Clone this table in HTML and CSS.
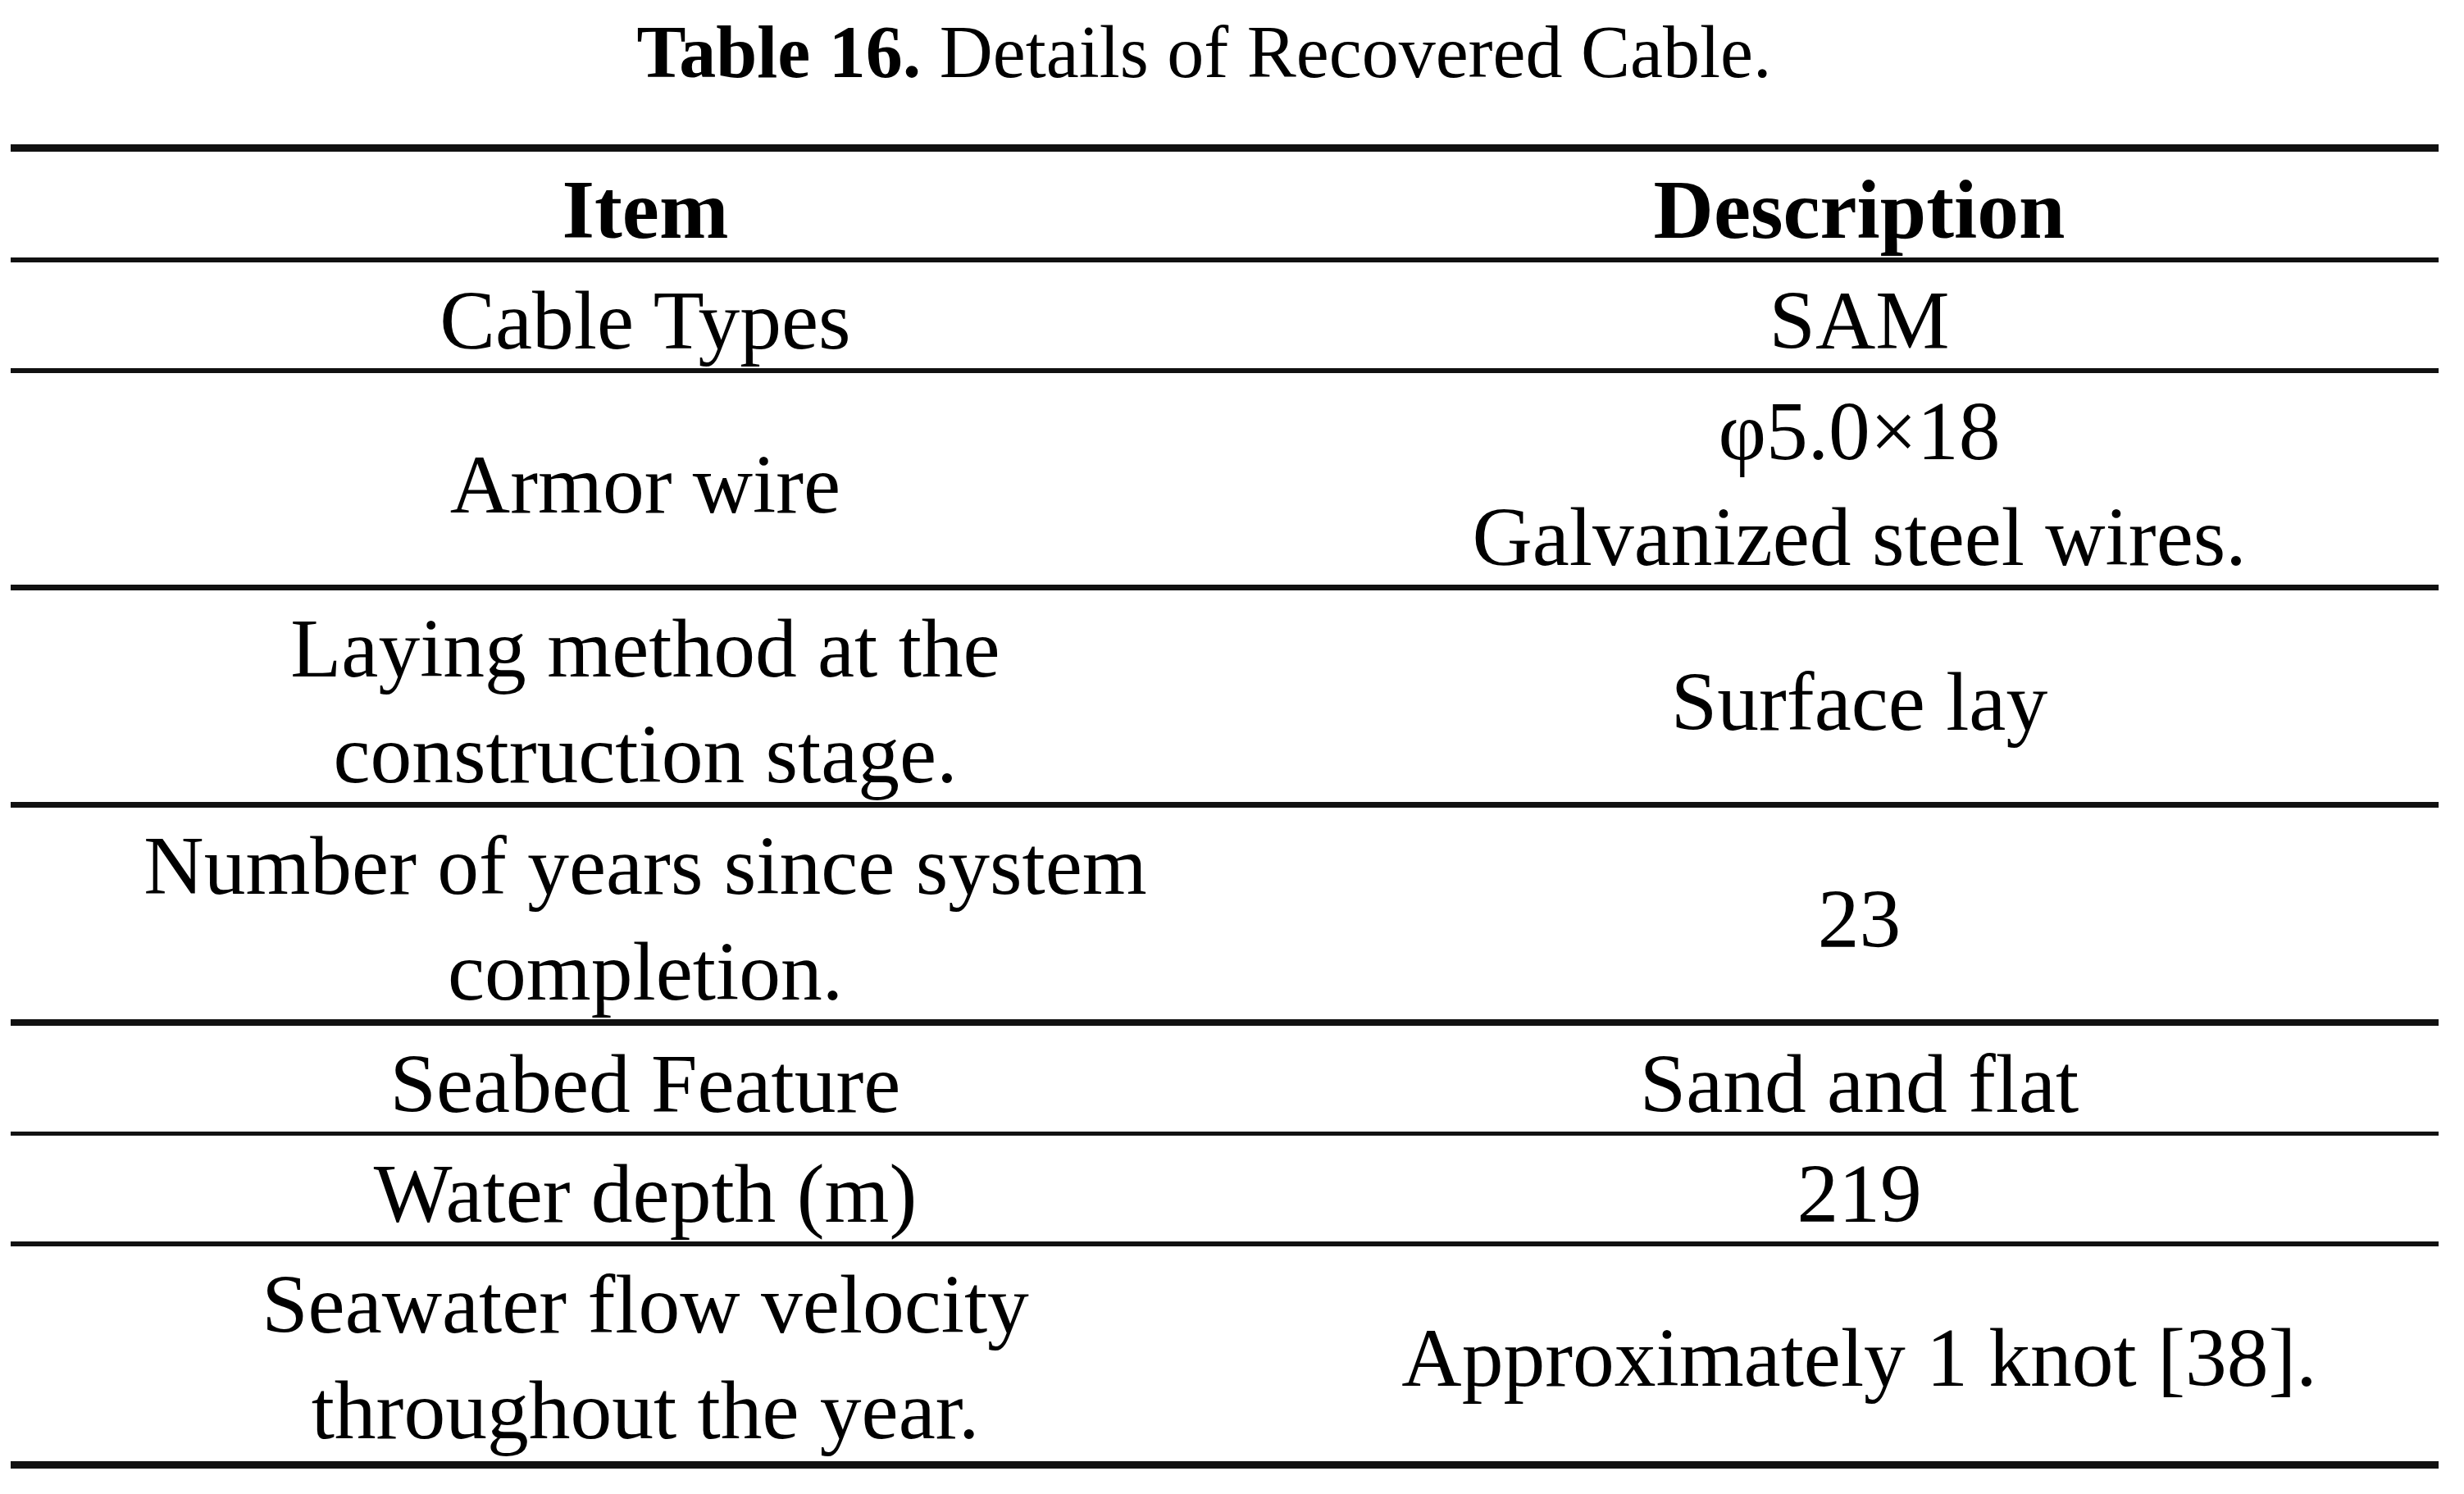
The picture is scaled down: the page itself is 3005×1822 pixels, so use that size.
FILE: index.html
```html
<!DOCTYPE html>
<html lang="en">
<head>
<meta charset="utf-8">
<title>Table 16. Details of Recovered Cable.</title>
<link rel="stylesheet" href="styles.css">
</head>
<body>
<div class="page">
  <div class="caption"><b>Table 16.</b> Details of Recovered Cable.</div>
  <div class="table">
    <div class="row head single b6">
      <div class="cell">Item</div>
      <div class="cell">Description</div>
    </div>
    <div class="row single b6">
      <div class="cell">Cable Types</div>
      <div class="cell">SAM</div>
    </div>
    <div class="row double b7">
      <div class="cell">Armor wire</div>
      <div class="cell">φ5.0×18<br>Galvanized steel wires.</div>
    </div>
    <div class="row double b7">
      <div class="cell">Laying method at the<br>construction stage.</div>
      <div class="cell">Surface lay</div>
    </div>
    <div class="row double b8">
      <div class="cell">Number of years since system<br>completion.</div>
      <div class="cell">23</div>
    </div>
    <div class="row single b5">
      <div class="cell">Seabed Feature</div>
      <div class="cell">Sand and flat</div>
    </div>
    <div class="row single b6">
      <div class="cell">Water depth (m)</div>
      <div class="cell">219</div>
    </div>
    <div class="row double last b9">
      <div class="cell">Seawater flow velocity<br>throughout the year.</div>
      <div class="cell">Approximately 1 knot [38].</div>
    </div>
  </div>
</div>
</body>
</html>
```

FILE: styles.css
```css
html, body {
  margin: 0;
  padding: 0;
  background: #ffffff;
}

body {
  font-family: "Liberation Serif", "Times New Roman", serif;
  color: #000000;
}

.page {
  width: 3005px;
  padding: 14px 0 0 13px;
  box-sizing: border-box;
}

.caption {
  width: 2961px;
  box-sizing: border-box;
  padding-right: 50px;
  text-align: center;
  font-size: 90px;
  line-height: 100px;
  height: 100px;
  margin-bottom: 62px;
}

.caption b {
  font-weight: bold;
}

.table {
  width: 2961px;
  border-top: 9px solid #111111;
}

.row {
  display: grid;
  grid-template-columns: 1548px 1fr;
  border-bottom: 6px solid #111111;
  box-sizing: content-box;
}

.single {
  height: 129px;
}

.double {
  height: 258px;
}

.last {
  height: 262px;
}

.b5 { border-bottom-width: 5px; }
.b6 { border-bottom-width: 6px; }
.b7 { border-bottom-width: 7px; }
.b8 { border-bottom-width: 8px; }
.b9 { border-bottom-width: 9px; }

.cell {
  display: flex;
  align-items: center;
  justify-content: center;
  text-align: center;
  font-size: 101.5px;
  line-height: 129px;
  padding-top: 7px;
  box-sizing: border-box;
  height: 100%;
}

.head .cell {
  font-weight: bold;
}
```
